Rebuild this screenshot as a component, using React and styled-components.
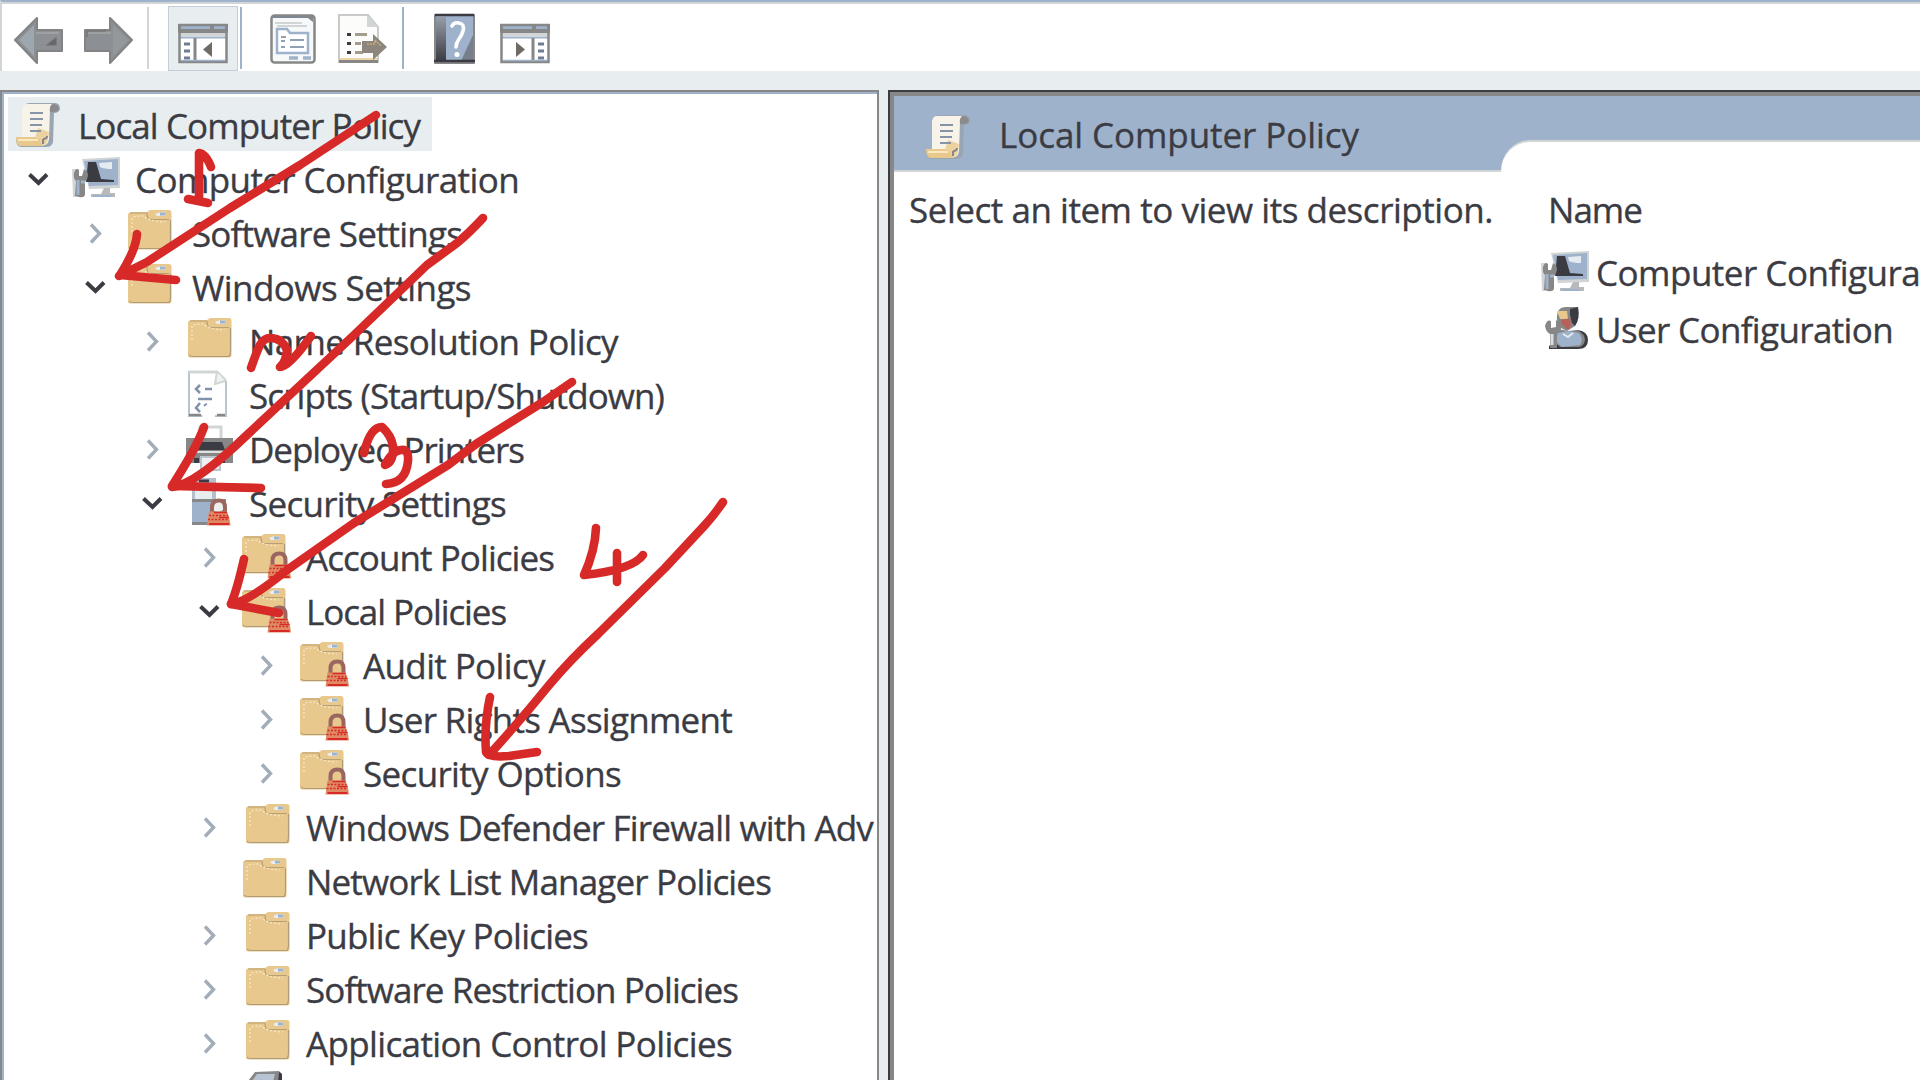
import React, { useLayoutEffect, useRef, useState } from "react";
import styled, { createGlobalStyle } from "styled-components";

const c = {
  ink: "#3b3b43",
  gray: "#878787",
  blue: "#9fb2cb",
  pale: "#e8eef0",
  silver: "#d2d5d6",
  tan: "#e8c88c",
  red: "#d72a28",
};

const GlobalStyle = createGlobalStyle`
  body { margin: 0; overflow: hidden; background: #fff; }
  * { box-sizing: border-box; }
`;

const Window = styled.div`
  position: relative;
  width: 1920px;
  height: 1080px;
  overflow: hidden;
  display: flex;
  flex-direction: column;
  background: ${c.pale};
  color: ${c.ink};
  font-family: "Open Sans", "Noto Sans", sans-serif;
  font-size: 35px;
`;

const Toolbar = styled.header`
  flex: none;
  height: 71px;
  display: flex;
  align-items: stretch;
  background: #fff;
  border-top: 2px solid ${c.blue};
  border-left: 2px solid ${c.silver};
  box-shadow: inset 0 2px 0 ${c.silver};
`;

const Tool = styled.div`
  width: ${(p) => p.$w}px;
  margin-left: ${(p) => p.$gap || 0}px;
  margin-top: 4px;
  display: flex;
  justify-content: center;
  background: ${(p) => (p.$pressed ? c.pale : "transparent")};
  border: ${(p) => (p.$pressed ? `1px solid #c3ced9` : "0")};
  svg { display: block; flex: none; margin-top: ${(p) => (p.$pressed ? -1 : 0)}px; }
`;

const Divider = styled.div`
  width: 2px;
  margin: 5px 0 2px ${(p) => p.$gap}px;
  background: ${(p) => p.$color};
`;

const Panes = styled.main`
  flex: 1;
  min-height: 0;
  margin-top: 19px;
  display: flex;
  gap: 9px;
`;

const TreePane = styled.nav`
  width: 879px;
  overflow: hidden;
  background: #fff;
  border: 2px solid ${c.gray};
  border-bottom: 0;
  box-shadow: inset 1px 1px 0 1px ${c.blue};
  padding: 5px 1px 0 0;
`;

const Text = styled.span`
  white-space: pre;
  line-height: 54px;
  -webkit-text-stroke: 0.35px ${c.ink};
`;

const Row = styled.div`
  height: 54px;
  display: flex;
  align-items: center;
  padding-left: ${(p) => p.$indent}px;
  ${Text} { margin-top: 3px; }
`;

const RootRow = styled(Row)`
  width: 424px;
  height: 54px;
  margin-left: 6px;
  background: ${c.pale};
`;

const Twisty = styled.div`
  flex: none;
  width: 56px;
  height: 54px;
  display: flex;
  align-items: center;
  justify-content: center;
`;

const IconSlot = styled.div`
  flex: none;
  width: ${(p) => p.$w}px;
  height: 54px;
  padding-left: ${(p) => p.$pad}px;
  svg { display: block; overflow: visible; }
`;

const DetailPane = styled.section`
  flex: 1;
  min-width: 0;
  display: flex;
  flex-direction: column;
  background: #fff;
  border-top: 2px solid ${c.ink};
  border-left: 2px solid ${c.ink};
`;

const DetailInner = styled.div`
  flex: 1;
  border-top: 4px solid ${c.gray};
  border-left: 4px solid ${c.gray};
`;

const DetailHeader = styled.div`
  height: 76px;
  display: flex;
  background: ${c.blue};
`;

const HeaderTitle = styled.div`
  width: 607px;
  padding-left: 31px;
  display: flex;
  border-bottom: 2px solid ${c.silver};
  ${Text} { line-height: 77px; }
  svg { margin-top: 13px; }
`;

const HeaderTab = styled.div`
  flex: 1;
  margin-top: 44px;
  background: #fff;
  border-top: 2px solid ${c.silver};
  border-top-left-radius: 29px 31px;
`;

const DetailBody = styled.div`
  display: flex;
`;

const Description = styled.div`
  width: 640px;
  padding: 11px 0 0 15px;
`;

const List = styled.div`
  flex: 1;
  overflow: hidden;
  padding-top: 11px;
`;

const ColumnHead = styled.div`
  padding-left: 14px;
  margin-bottom: 8px;
`;

const Item = styled.div`
  height: 57px;
  display: flex;
  padding-left: 7px;
  ${Text} { margin-top: 1px; }
`;

const Ink = styled.svg`
  position: absolute;
  inset: 0;
  fill: none;
  stroke: ${c.red};
  stroke-width: 8.6;
  stroke-linecap: round;
  stroke-linejoin: round;
  pointer-events: none;
`;

/* Spreads the letters so that the label takes the given width. */
function Label({ width, children }) {
  const ref = useRef(null);
  const [spacing, setSpacing] = useState(0);
  useLayoutEffect(() => {
    const natural = ref.current.getBoundingClientRect().width;
    setSpacing((width - natural) / children.length);
  }, []);
  return (
    <Text ref={ref} style={{ letterSpacing: spacing }}>
      {children}
    </Text>
  );
}

const Chevron = ({ open }) =>
  open ? (
    <svg width="24" height="24" viewBox="0 0 24 24" fill="none" stroke={c.ink} strokeWidth="4">
      <path d="M3.500 8.500 L12.500 17 L21 8.500" />
    </svg>
  ) : (
    <svg width="24" height="24" viewBox="0 0 24 24" fill="none" stroke="#a3adb8" strokeWidth="3.400">
      <path d="M8 4.500 L16.500 13.500 L8 22.500" />
    </svg>
  );

const Lock = ({ x, y }) => (
  <g transform={`translate(${x} ${y})`}>
    <path d="M5 15 V9 Q5 2 12 2 Q18 2 18 9 V15" fill="none" stroke="#9b6660" strokeWidth="4" />
    <path d="M2 13 H20 Q23 19 23.500 27 H0 Z" fill="#df8a62" />
    <path d="M2 17 H21 M1 21 H22" stroke={c.red} strokeWidth="1.500" strokeDasharray="2 1.500" />
    <path d="M7 14 H20 M12 19 H22" stroke={c.red} strokeWidth="1.500" />
    <path d="M2 25.500 H22" stroke={c.red} strokeWidth="2" />
  </g>
);

const Folder = ({ locked }) => (
  <svg width="50" height="54" viewBox="0 0 50 54">
    <path d="M0 9 Q1 7 4 7 H19 L22 5 H41 Q43.500 5 43.500 8 V42 Q43.500 44.500 41 44.500 H2 Q0 44.500 0 42 Z" fill={c.tan} />
    <path d="M2 8 H19 M21 14.500 H41 M19 8 Q19 14 22 14.500" fill="none" stroke="#b99f74" strokeWidth="1.200" />
    <path d="M4 27 V13 Q5 11 16 11 Q19 16 37 17" fill="none" stroke="#f8e9c9" strokeWidth="1.200" strokeDasharray="2 2" />
    <path d="M1 42 Q2 43.500 5 43.500 H41 Q42.500 42 42.500 38 V15" fill="none" stroke="#b09b78" strokeWidth="1.200" />
    <path d="M27 9 Q30 7 37 7 V11 H29 Z" fill="#e7edf0" />
    <path d="M32 9 H37" stroke={c.blue} strokeWidth="3" />
    {locked && <Lock x={25.5} y={22.500} />}
  </svg>
);

const Scroll = () => (
  <svg width="50" height="54" viewBox="0 0 50 54">
    <path d="M9 10 Q10 6 15 6 H40 Q45 6 45 12 Q44 16 39 16 L38 45 Q37 50 31 50 H6 Q1 49 1 42 H7 Z" fill="#9aa5b3" />
    <path d="M7 12 Q8 7 12 7 H37 Q35 9 35 13 L34 42 Q33 48 29 48 L7 42 Z" fill="#f7f3e8" />
    <path d="M35 15 Q34 7 39 7 Q44 8 44 12 Q43 15 38 15 Z" fill="#8b8b8b" />
    <path d="M1 40 H25 Q26 48 30 49 H5 Q1 48 1 40Z" fill={c.tan} />
    <path d="M23 31 L34 35 L33 42 Q32 47 29 48 Q25 46 25 42 L20 41Z" fill="#ecd29f" />
    <path d="M3 43 H23" stroke="#faecc8" strokeWidth="1.800" />
    <path d="M15 16 H28 M15 22 H28 M15 28 H27 M15 34 H26" stroke="#8594a6" strokeWidth="1.800" />
    <path d="M28 42 Q32 42 32 39 M28 42 V47" fill="none" stroke={c.gray} strokeWidth="2" />
  </svg>
);

const Computer = () => (
  <svg width="50" height="54" viewBox="0 0 50 54">
    <path d="M10 8 L48 6 V37 L17 38 Z" fill="#d0d4d5" />
    <path d="M12 10 L46 8 V34 L17 35 Z" fill={c.blue} />
    <path d="M16 11 H24 L29 28 L42 29 V31 H14 Z" fill={c.ink} />
    <path d="M27 12 L40 11 V18 Q32 18 28 16 Z" fill="#e5ebf0" />
    <path d="M32 37 H38 V42 H43 V46 H19 V43 H29 Z" fill="#b7babb" />
    <path d="M21 45 H39" stroke={c.blue} strokeWidth="2" />
    <path d="M0 18 L4 18 V46 H1 Z" fill={c.silver} />
    <path d="M2 22 Q4 16 7 19 V25 H10 L12 18 Q18 21 15 28 L13 31 V44 Q12 47 7 46 L3 45 L4 30 Q1 27 2 22Z" fill={c.gray} />
    <path d="M6 29 V44 M9 31 H13" stroke={c.blue} strokeWidth="3" />
  </svg>
);

const User = () => (
  <svg width="50" height="54" viewBox="0 0 50 54">
    <path d="M14 18 Q13 5 23 5 H35 Q37 17 32 24 L24 29 Q15 26 14 18Z" fill={c.gray} />
    <path d="M27 7 L35 5 Q37 17 32 24 L29 21 L27 13 Z" fill={c.ink} />
    <path d="M14 9 H24 L25 17 H17 Z" fill={c.tan} />
    <path d="M18 18 L27 16 L28 23 L25 28 L19 22Z" fill="#b8605a" />
    <path d="M34 28 Q45 29 45 38 Q45 47 35 47 H6 V44 Z" fill={c.ink} />
    <path d="M15 27 L25 29 L34 28 Q42 32 42 38 Q41 44 36 45 H17 L10 39 Z" fill={c.gray} />
    <path d="M15 31 L25 29 L36 31 Q41 37 37 43 L19 45 L12 39 Z" fill={c.blue} />
    <path d="M20 32 L25 35 L30 31" fill="none" stroke="#e3e9ee" strokeWidth="2" />
    <path d="M2 24 Q4 17 8 19 V26 L13 25 V18 Q19 21 18 27 L14 32 V46 H7 V32 Q3 30 2 24Z" fill={c.gray} />
    <path d="M9 32 V43" stroke="#d8dfe4" strokeWidth="3" />
  </svg>
);

const Script = () => (
  <svg width="50" height="54" viewBox="0 0 50 54">
    <path d="M1 5 H29 L38 15 V49 H1 Z" fill="#fff" stroke="#bac4ce" strokeWidth="2" />
    <path d="M1 5 H29 L38 14" fill="none" stroke={c.silver} strokeWidth="3" />
    <path d="M29 5 L27 17 L37 14" fill="#f0f2f3" stroke={c.silver} strokeWidth="2" />
    <path d="M12 18 L8 22 L12 26 M17 22 H24 M10 32 H24 M12 36 L8 41 L12 45 M16 39 L19 37" fill="none" stroke="#8093aa" strokeWidth="2.500" />
    <path d="M1 48 H13 M29 48 H37" stroke={c.gray} strokeWidth="2.500" />
    <path d="M16 40 L34 27 L26 52 H14 Z" fill="#fff" />
  </svg>
);

const Printer = () => (
  <svg width="50" height="54" viewBox="0 0 50 54">
    <path d="M14 20 V6 H35 V20" fill="#fff" stroke={c.silver} strokeWidth="3" />
    <path d="M0 17 H47 V42 H0 Z" fill={c.gray} />
    <path d="M10 21 H36 L39 29 H7 Z" fill={c.ink} />
    <path d="M4 31 H43" stroke="#dfe1e1" strokeWidth="2" />
    <path d="M8 37 H13 V42 H8 Z M35 37 H39 V42 H35 Z" fill={c.ink} />
    <path d="M15 36 H34 V49 H15 Z" fill="#eef0f1" stroke="#bcc5cd" strokeWidth="2" />
  </svg>
);

const Server = () => (
  <svg width="50" height="54" viewBox="0 0 50 54">
    <path d="M0 3 H24 V26 H0 Z" fill="#b5c0cd" />
    <path d="M7 6 H17" stroke={c.ink} strokeWidth="3" />
    <path d="M3 14 H20 V24 H3Z" fill="#e8eef0" />
    <path d="M0 24 H34 V50 H0 Z" fill={c.gray} />
    <path d="M0 27 H20 V47 H0 Z" fill={c.blue} />
    <circle cx="26" cy="31" r="6" fill="#eee" />
    <Lock x={15} y={23.500} />
  </svg>
);

const PartialIcon = () => (
  <svg width="50" height="54" viewBox="0 0 50 54">
    <path d="M0 12 L7 3 L31 2 L34 5 V16 H0 Z" fill={c.gray} />
    <path d="M4 12 L9 5 H27 L24 16 H4Z" fill="#b6c3d2" />
    <path d="M31 3 L34 5 V16 H30Z" fill={c.ink} />
  </svg>
);

const Arrow = ({ flip }) => (
  <svg width="50" height="64" viewBox="0 0 50 64">
    <g transform={flip ? "translate(50 0) scale(-1 1)" : undefined}>
      <path d="M1 34 L23 12 V24 H48 V45 H23 V57 Z" fill="#8c8f93" stroke="#838383" strokeWidth="2" strokeLinejoin="round" />
      <path d="M5 34 L20 19 V50 Z" fill={flip ? "#94989d" : "#9ea6ae"} />
      <path d="M22 27 H45" stroke="#a5a6a6" strokeWidth="1.500" />
      <path d={flip ? "M27 25 H46 V31" : "M33 39 L42 32 V39 Z"} fill={flip ? "none" : "#666"} stroke="#707074" strokeWidth="1.200" />
    </g>
  </svg>
);

const PanelIcon = ({ flip }) => (
  <svg width="50" height="64" viewBox="0 0 50 64">
    <rect x="1" y="19" width="48" height="38" fill="#fff" />
    <path d="M0 18 H50 V27 H0Z" fill={c.gray} />
    <path d="M3 21.500 H32 M36 21.500 H47" stroke={c.blue} strokeWidth="3" />
    <path d="M2 28.500 H48" stroke={c.silver} strokeWidth="3" />
    <path d="M2 31.500 H48" stroke={c.blue} strokeWidth="2" />
    <g transform={flip ? "translate(50 0) scale(-1 1)" : undefined}>
      <path d="M17 32 V56" stroke={c.gray} strokeWidth="3" />
      <path d="M6 38 H12 M6 45 H12 M6 52 H12" stroke="#6e7d92" strokeWidth="3" />
      <path d="M34 36 V51 L25 43.500 Z" fill="#6f6a64" />
    </g>
    <rect x="1.500" y="19" width="47" height="37" fill="none" stroke={c.gray} strokeWidth="2.500" />
    <path d="M3 54.500 H47" stroke={c.blue} strokeWidth="1.500" />
  </svg>
);

const PropertiesIcon = () => (
  <svg width="46" height="64" viewBox="0 0 46 64">
    <rect x="1.500" y="9.500" width="43" height="47" rx="3" fill="#f6f8f9" stroke={c.gray} strokeWidth="2.500" />
    <path d="M3 11 H43" stroke="#7d8692" strokeWidth="2" />
    <path d="M34 9 L43 16 V10Z" fill={c.gray} />
    <path d="M5 17 H32 M7 20 H37" stroke={c.silver} strokeWidth="2" />
    <path d="M7 23 H17 L20 27 H38 V47 H7 Z" fill="#fff" stroke={c.blue} strokeWidth="2.500" />
    <path d="M11 31 H16 M20 34 H34 M11 35 H15 M11 41 H15 M20 41 H34" stroke="#91a0b3" strokeWidth="2" />
    <path d="M19 52 H28 M33 52 H41" stroke={c.blue} strokeWidth="3.500" />
  </svg>
);

const ExportIcon = () => (
  <svg width="50" height="64" viewBox="0 0 50 64">
    <path d="M1 9 H30 L40 21 V56 H1 Z" fill="#fcfcfa" stroke="#c9cbc8" strokeWidth="2" />
    <path d="M29 9 V21 H40 Z" fill={c.silver} />
    <path d="M1 55.500 H40" stroke={c.gray} strokeWidth="3" />
    <path d="M2 53 H39" stroke={c.tan} strokeWidth="1.500" />
    <path d="M9 28.500 H13 M9 37.500 H13 M9 46.500 H13" stroke={c.ink} strokeWidth="3" />
    <path d="M17 28.500 H29 M17 37.500 H23 M17 46.500 H25" stroke="#a49c8d" strokeWidth="3" />
    <path d="M24 35 H35 V28 L49 41 L35 54 V47 H24 Z" fill="#8c867d" />
    <path d="M29 38 H37 V34 L43 40" fill="none" stroke="#c6ad7d" strokeWidth="1.500" strokeDasharray="2 1" />
  </svg>
);

const HelpIcon = () => (
  <svg width="42" height="64" viewBox="0 0 42 64">
    <defs>
      <linearGradient id="spine" x1="0" y1="0" x2="0" y2="1">
        <stop offset="0" stopColor="#969da7" />
        <stop offset="1" stopColor={c.ink} />
      </linearGradient>
    </defs>
    <rect x="0" y="8" width="41" height="50" rx="1" fill={c.gray} />
    <path d="M2 10 H39 V55 H2Z" fill={c.blue} />
    <path d="M2 11 H12 V55 H2Z" fill="url(#spine)" />
    <path d="M27 55 L39 29 V55Z" fill="#777f8a" />
    <path d="M0 55 H41 M1 9 H40" stroke={c.ink} strokeWidth="2.500" />
    <path d="M18 20 Q20 16 25 17 Q31 18 29 25 Q28 29 25 33 Q22 37 22 41" fill="none" stroke="#fff" strokeWidth="3.600" strokeLinecap="round" />
    <circle cx="23" cy="48.500" r="2.500" fill="#fff" />
  </svg>
);

/* level, twisty state, icon, icon offset, label, label width */
const rows = [
  [1, "open", <Computer />, 6, "Computer Configuration", 384],
  [2, "closed", <Folder />, 5, "Software Settings", 270],
  [2, "open", <Folder />, 5, "Windows Settings", 279],
  [3, "closed", <Folder />, 8, "Name Resolution Policy", 369],
  [3, null, <Script />, 8, "Scripts (Startup/Shutdown)", 415],
  [3, "closed", <Printer />, 6, "Deployed Printers", 275],
  [3, "open", <Server />, 12, "Security Settings", 257],
  [4, "closed", <Folder locked />, 5, "Account Policies", 248],
  [4, "open", <Folder locked />, 5, "Local Policies", 200],
  [5, "closed", <Folder locked />, 6, "Audit Policy", 182],
  [5, "closed", <Folder locked />, 6, "User Rights Assignment", 369],
  [5, "closed", <Folder locked />, 6, "Security Options", 258],
  [4, "closed", <Folder />, 9, "Windows Defender Firewall with Adv", 567],
  [4, null, <Folder />, 6, "Network List Manager Policies", 465],
  [4, "closed", <Folder />, 9, "Public Key Policies", 282],
  [4, "closed", <Folder />, 9, "Software Restriction Policies", 432],
  [4, "closed", <Folder />, 9, "Application Control Policies", 426],
  [4, null, <PartialIcon />, 11, null, 0],
];

const strokes = [
  "M376 115 L300 165 L230 208 L147 262 L119 276",
  "M137 234 Q136 250 120 275 L176 280",
  "M208 203 L188 199 M199 201 V153 Q206 154 211 167",
  "M483 218 Q468 234 457 243 L427 265 L353 336 L247 435 Q195 485 172 487",
  "M204 427 Q197 447 172 486 L261 488",
  "M251 368 C258 348 261 338 270 338 Q282 338 287 350 Q286 362 280 367 Q289 367 311 336",
  "M572 382 L543 402 L476 444 L448 465 L354 523 L287 570 Q248 602 231 604",
  "M244 559 Q237 590 231 604 L279 613",
  "M364 453 Q370 427 382 427 Q391 435 393 446 Q394 462 385 465 Q392 451 401 450 Q409 449 408 461 Q406 483 386 484",
  "M723 502 Q715 514 705 525 L665 568 L598 634 Q570 660 550 684 Q520 721 489 755",
  "M490 697 Q484 725 486 752 Q488 758 509 756 L537 752",
  "M596 528 Q595 551 584 575 Q632 570 643 555 M617 553 V582",
];

export default function App() {
  return (
    <Window>
      <GlobalStyle />
      <Toolbar>
        <Tool $w={50} $gap={12}><Arrow /></Tool>
        <Tool $w={50} $gap={19}><Arrow flip /></Tool>
        <Divider $gap={14} $color={c.silver} />
        <Tool $w={70} $gap={18.500} $pressed><PanelIcon /></Tool>
        <Divider $gap={2} $color={c.blue} />
        <Tool $w={46} $gap={28.500}><PropertiesIcon /></Tool>
        <Tool $w={50} $gap={22}><ExportIcon /></Tool>
        <Divider $gap={14} $color={c.blue} />
        <Tool $w={42} $gap={30}><HelpIcon /></Tool>
        <Tool $w={50} $gap={24}><PanelIcon flip /></Tool>
      </Toolbar>
      <Panes>
        <TreePane>
          <RootRow $indent={7}>
            <IconSlot $w={63} $pad={0}><Scroll /></IconSlot>
            <Label width={342}>Local Computer Policy</Label>
          </RootRow>
          {rows.map(([level, state, icon, pad, label, width], i) => (
            <Row key={i} $indent={8 + 57 * (level - 1)}>
              <Twisty>{state && <Chevron open={state === "open"} />}</Twisty>
              <IconSlot $w={69} $pad={pad}>{icon}</IconSlot>
              {label && <Label width={width}>{label}</Label>}
            </Row>
          ))}
        </TreePane>
        <DetailPane>
          <DetailInner>
            <DetailHeader>
              <HeaderTitle>
                <IconSlot $w={74} $pad={0}><Scroll /></IconSlot>
                <Label width={360}>Local Computer Policy</Label>
              </HeaderTitle>
              <HeaderTab />
            </DetailHeader>
            <DetailBody>
              <Description><Label width={584}>Select an item to view its description.</Label></Description>
              <List>
                <ColumnHead><Label width={94}>Name</Label></ColumnHead>
                <Item>
                  <IconSlot $w={55} $pad={0}><Computer /></IconSlot>
                  <Label width={386}>Computer Configuration</Label>
                </Item>
                <Item>
                  <IconSlot $w={55} $pad={2}><User /></IconSlot>
                  <Label width={297}>User Configuration</Label>
                </Item>
              </List>
            </DetailBody>
          </DetailInner>
        </DetailPane>
      </Panes>
      <Ink width="1920" height="1080" viewBox="0 0 1920 1080">
        {strokes.map((d) => <path key={d} d={d} />)}
      </Ink>
    </Window>
  );
}
